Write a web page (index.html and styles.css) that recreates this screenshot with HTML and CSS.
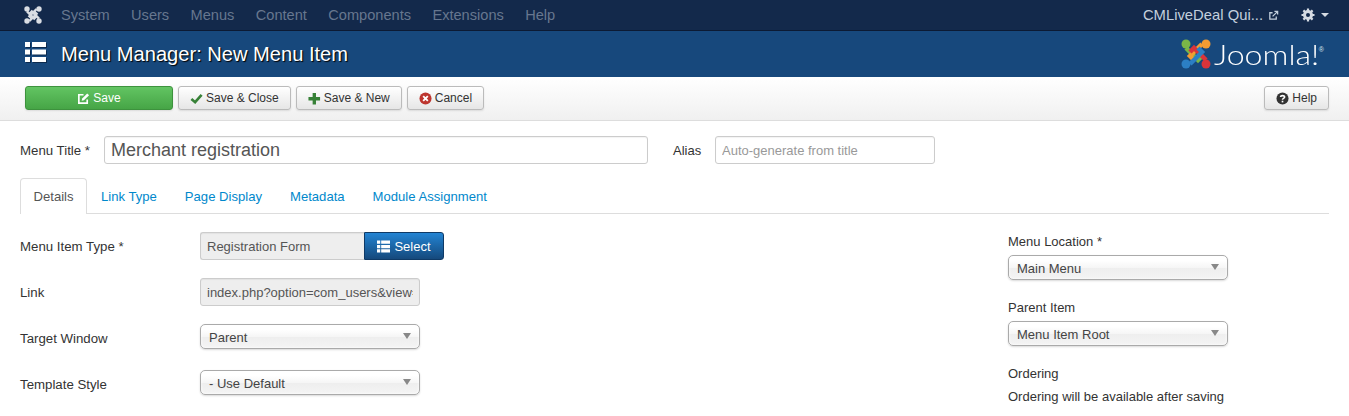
FILE: index.html
```html
<!DOCTYPE html>
<html>
<head>
  <meta charset="utf-8">
  <title>Menu Manager: New Menu Item</title>
  <link rel="stylesheet" href="styles.css">
</head>
<body>
  <div class="navbar">
    <svg class="nav-logo" viewBox="0 0 30 30">
      <g fill="none" stroke="#d9dde3" stroke-width="4">
        <path d="M5 9L17 21L21 17"/>
        <path d="M5 9L17 21L21 17" transform="rotate(90 15 15)"/>
        <path d="M5 9L17 21L21 17" transform="rotate(180 15 15)"/>
        <path d="M5 9L17 21L21 17" transform="rotate(270 15 15)"/>
      </g>
      <g fill="#d9dde3"><circle cx="5" cy="5" r="4.500"/><circle cx="25" cy="5" r="4.500"/><circle cx="25" cy="25" r="4.500"/><circle cx="5" cy="25" r="4.500"/></g>
    </svg>
    <a>System</a>
    <a>Users</a>
    <a>Menus</a>
    <a>Content</a>
    <a>Components</a>
    <a>Extensions</a>
    <a>Help</a>
    <div class="nav-right">
      <span class="site">CMLiveDeal Qui...</span>
      <svg class="ext" viewBox="0 0 12 12"><path d="M9 7v3H2V3h3" fill="none" stroke="#c3d0de" stroke-width="1.400"/><path d="M5 7l5-5M7 1.500h3.500V5" fill="none" stroke="#c3d0de" stroke-width="1.400"/></svg>
      <svg class="gear" viewBox="0 0 14 14"><circle cx="7" cy="7" r="3.600" fill="none" stroke="#d5dbe3" stroke-width="2.800"/><path d="M7 .5v13M.5 7h13M2.400 2.400l9.200 9.200M11.600 2.400l-9.200 9.200" stroke="#d5dbe3" stroke-width="2.200"/><circle cx="7" cy="7" r="2" fill="#13294b"/></svg>
      <span class="caret"></span>
    </div>
  </div>

  <div class="subhead">
    <svg class="head-icon" viewBox="0 0 21 20"><path d="M0 0h5v5H0zM7 0h14v5H7zM0 7.500h5v5H0zM7 7.500h14v5H7zM0 15h5v5H0zM7 15h14v5H7z" fill="#fff"/></svg>
    <h1>Menu Manager: New Menu Item</h1>
    <div class="brand">
      <svg class="brand-mark" viewBox="0 0 30 30">
        <g fill="none" stroke-width="4.500">
          <path d="M5 9L17 21L21 17" stroke="#7ab648"/>
          <path d="M5 9L17 21L21 17" stroke="#f39c32" transform="rotate(90 15 15)"/>
          <path d="M5 9L17 21L21 17" stroke="#d9343a" transform="rotate(180 15 15)"/>
          <path d="M5 9L17 21L21 17" stroke="#2c7fc4" transform="rotate(270 15 15)"/>
        </g>
        <circle cx="5" cy="5" r="4.500" fill="#7ab648"/><circle cx="25" cy="5" r="4.500" fill="#f39c32"/>
        <circle cx="25" cy="25" r="4.500" fill="#d9343a"/><circle cx="5" cy="25" r="4.500" fill="#2c7fc4"/>
      </svg>
      <span class="brand-name">Joomla!</span>
      <span class="brand-reg">®</span>
    </div>
  </div>

  <div class="toolbar">
    <button class="btn btn-save">
      <svg class="ico" viewBox="0 0 14 14"><path d="M11 8v4H2V3h5" fill="none" stroke="#fff" stroke-width="1.800"/><path d="M5 9.500l.6-2.500L11 1.500 13 3.500 7.500 9z" fill="#fff"/></svg>
      Save
    </button>
    <button class="btn">
      <svg class="ico" viewBox="0 0 14 14"><path d="M1.500 7.500L5.500 11 12.500 3" fill="none" stroke="#378137" stroke-width="2.800"/></svg>
      Save &amp; Close
    </button>
    <button class="btn">
      <svg class="ico" viewBox="0 0 14 14"><path d="M5 1h3.600v4.500H13v3.600H8.600V13.500H5V9.100H.5V5.500H5z" fill="#378137"/></svg>
      Save &amp; New
    </button>
    <button class="btn">
      <svg class="ico" viewBox="0 0 14 14"><circle cx="7" cy="7" r="6.500" fill="#bd362f"/><path d="M4.500 4.500l5 5M9.500 4.500l-5 5" stroke="#fff" stroke-width="2"/></svg>
      Cancel
    </button>
    <button class="btn btn-help">
      <svg class="ico" viewBox="0 0 14 14"><circle cx="7" cy="7" r="6.500" fill="#333"/><path d="M4.800 5.400C5 3.400 9.300 3.300 9.300 5.500 9.300 7 7 6.800 7 8.300" fill="none" stroke="#fff" stroke-width="1.700"/><rect x="6.100" y="9.400" width="1.800" height="1.800" fill="#fff"/></svg>
      Help
    </button>
  </div>

  <div class="content">
    <div class="title-row">
      <label class="title-label">Menu Title *</label>
      <input class="input input-title" type="text" value="Merchant registration">
      <label class="alias-label">Alias</label>
      <input class="input input-alias" type="text" placeholder="Auto-generate from title">
    </div>

    <div class="tabs">
      <a class="tab active">Details</a>
      <a class="tab">Link Type</a>
      <a class="tab">Page Display</a>
      <a class="tab">Metadata</a>
      <a class="tab">Module Assignment</a>
    </div>

    <div class="columns">
      <div class="main-col">
        <div class="field">
          <label>Menu Item Type *</label>
          <div class="input-append">
            <input class="input input-readonly input-type" type="text" value="Registration Form" readonly>
            <button class="btn-select">
              <svg class="ico" viewBox="0 0 14 14"><path d="M0 .5h3.500V4H0zM4.500 .5H14V4H4.500zM0 5.250h3.500v3.500H0zM4.500 5.250H14v3.500H4.500zM0 10h3.500v3.500H0zM4.500 10H14v3.500H4.500z" fill="#fff"/></svg>
              Select
            </button>
          </div>
        </div>
        <div class="field">
          <label>Link</label>
          <input class="input input-readonly input-link" type="text" value="index.php?option=com_users&amp;view=registration" readonly>
        </div>
        <div class="field">
          <label>Target Window</label>
          <div class="select"><select><option>Parent</option></select></div>
        </div>
        <div class="field">
          <label>Template Style</label>
          <div class="select"><select><option>- Use Default</option></select></div>
        </div>
      </div>

      <div class="side-col">
        <div class="side-label">Menu Location *</div>
        <div class="select"><select><option>Main Menu</option></select></div>
        <div class="side-label spaced">Parent Item</div>
        <div class="select"><select><option>Menu Item Root</option></select></div>
        <div class="side-label ordering">Ordering</div>
        <div class="side-text">Ordering will be available after saving</div>
      </div>
    </div>
  </div>
</body>
</html>
```

FILE: styles.css
```css
html, body {
  height: 100%;
  overflow: hidden;
}
body {
  margin: 0;
  background: #fff;
  font-family: "Liberation Sans", Arial, sans-serif;
  font-size: 13px;
  color: #333;
}

/* top bar */
.navbar {
  display: flex;
  align-items: center;
  height: 30px;
  background: #13294b;
  border-bottom: 1px solid #0c1a33;
  padding: 0 20px 0 24px;
}
.nav-logo {
  width: 18px;
  height: 18px;
  margin-right: 19px;
}
.navbar a {
  color: #67778f;
  font-size: 14.6px;
  margin-right: 21.4px;
}
.nav-right {
  margin-left: auto;
  display: flex;
  align-items: center;
}
.site {
  color: #c3d0de;
  font-size: 14.8px;
}
.ext {
  width: 11px;
  height: 11px;
  margin-left: 5px;
}
.gear {
  width: 14px;
  height: 14px;
  margin-left: 22px;
}
.caret {
  width: 0;
  height: 0;
  margin-left: 6px;
  border-left: 4px solid transparent;
  border-right: 4px solid transparent;
  border-top: 4px solid #d5dbe3;
}

/* blue title bar */
.subhead {
  display: flex;
  align-items: center;
  height: 46px;
  background: #17487c;
  padding: 0 25px 0 25px;
}
.head-icon {
  width: 21px;
  height: 20px;
  margin: -4px 15px 0 0;
  filter: drop-shadow(1px 1px 0 #0c2a4d);
}
.subhead h1 {
  margin: 0;
  font-size: 20.1px;
  font-weight: normal;
  color: #fff;
  text-shadow: 1px 1px 1px #000;
}
.brand {
  margin-left: auto;
  display: flex;
  align-items: center;
}
.brand-mark {
  width: 30px;
  height: 30px;
  margin-right: 3px;
}
/* the wordmark is wider than Lato, so stretch it */
.brand-name {
  width: 104px;
  font-family: Lato, "Liberation Sans", sans-serif;
  font-weight: 300;
  font-size: 27px;
  white-space: nowrap;
  color: #fff;
  transform: scaleX(1.19);
  transform-origin: left;
}
.brand-reg {
  align-self: flex-start;
  margin: 8px 0 0 1px;
  font-size: 7px;
  color: #dfe6ee;
}

/* toolbar */
.toolbar {
  display: flex;
  gap: 5px;
  height: 34px;
  padding: 9px 20px 0 25px;
  background: linear-gradient(#fff, #f0f0f0);
  border-bottom: 1px solid #ddd;
}
.btn {
  height: 24px;
  padding: 0 11px;
  display: flex;
  align-items: center;
  justify-content: center;
  gap: 3px;
  border: 1px solid #bbb;
  border-radius: 3px;
  background: linear-gradient(#fff, #e6e6e6);
  box-shadow: 0 1px 2px rgba(0, 0, 0, .1);
  font-family: inherit;
  font-size: 12px;
  color: #333;
}
.btn-save {
  width: 148px;
  background: linear-gradient(#62c462, #46a546);
  border-color: #3d923d;
  color: #fff;
}
.btn-help {
  margin-left: auto;
}
.ico {
  width: 13px;
  height: 13px;
}

/* form */
.content {
  padding: 15px 20px 0;
}
.title-row {
  display: flex;
  align-items: center;
}
.title-label {
  width: 84px;
  font-size: 13.25px;
}
.alias-label {
  margin-left: 25px;
  width: 42px;
}
.input {
  box-sizing: border-box;
  height: 28px;
  padding: 0 6px;
  border: 1px solid #ccc;
  border-radius: 3px;
  font-family: inherit;
  font-size: 13px;
  color: #555;
  background: #fff;
  box-shadow: inset 0 1px 1px rgba(0, 0, 0, .05);
}
.input::placeholder {
  color: #999;
}
.input-title {
  width: 544px;
  font-size: 18px;
}
.input-alias {
  width: 220px;
}
.input-readonly {
  background: #eee;
}

/* tabs */
.tabs {
  display: flex;
  margin-top: 14px;
  height: 35px;
  border-bottom: 1px solid #ddd;
}
.tab {
  padding: 0 14px;
  line-height: 38px;
  font-size: 13.1px;
  color: #0088cc;
}
.tab.active {
  padding: 0 12.5px;
  height: 36px;
  box-sizing: border-box;
  color: #555;
  background: #fff;
  border: 1px solid #ddd;
  border-bottom: 0;
  border-radius: 4px 4px 0 0;
  line-height: 36px;
}

/* field columns */
.columns {
  display: flex;
  justify-content: space-between;
}
.main-col {
  padding-top: 18px;
}
.field {
  display: flex;
  height: 28px;
  margin-bottom: 18px;
}
.field label {
  width: 180px;
  line-height: 29px;
  font-size: 13.25px;
}
.input-append {
  display: flex;
}
.input-type {
  width: 164px;
  border-right: 0;
  border-radius: 3px 0 0 3px;
}
.input-link {
  width: 220px;
}
.btn-select {
  width: 80px;
  height: 28px;
  display: flex;
  align-items: center;
  justify-content: center;
  gap: 4px;
  border: 1px solid #0f3a66;
  border-radius: 0 3px 3px 0;
  background: linear-gradient(#2384d3, #15497c);
  font-family: inherit;
  font-size: 13px;
  color: #fff;
}
.select {
  position: relative;
  width: 220px;
  height: 25px;
}
.select select {
  box-sizing: border-box;
  width: 100%;
  height: 25px;
  padding: 2px 8px 0;
  appearance: none;
  border: 1px solid #aaa;
  border-radius: 5px;
  background: linear-gradient(#fff 20%, #f6f6f6 50%, #eee 52%, #f4f4f4);
  box-shadow: inset 0 0 3px #fff, 0 1px 2px rgba(0, 0, 0, .15);
  font-family: inherit;
  font-size: 13px;
  color: #444;
}
.select::after {
  content: "";
  position: absolute;
  top: 9px;
  right: 9px;
  border-left: 4px solid transparent;
  border-right: 4px solid transparent;
  border-top: 6px solid #888;
}
.side-col {
  width: 321px;
  padding-top: 20px;
}
.side-label {
  line-height: 15px;
  margin-bottom: 6px;
}
.side-label.spaced {
  margin-top: 20px;
}
.side-label.ordering {
  margin-top: 20px;
  margin-bottom: 8px;
}
.side-text {
  line-height: 15px;
}
```
